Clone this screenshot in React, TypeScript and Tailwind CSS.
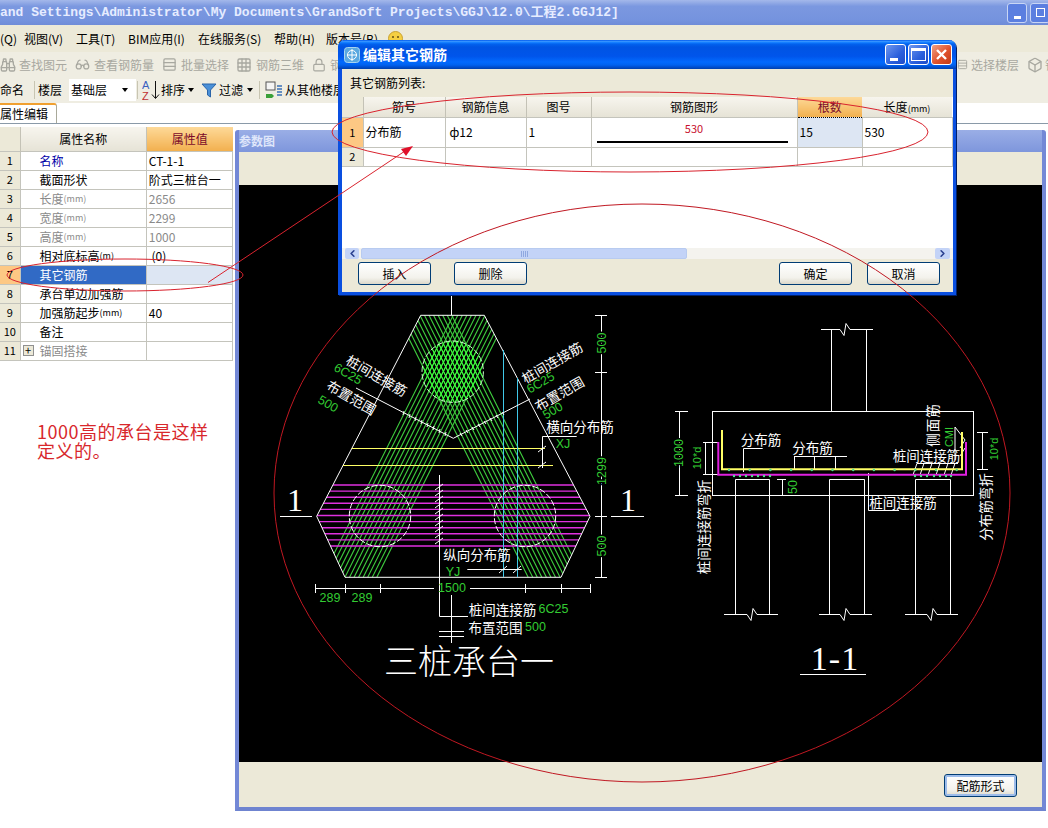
import { Binoculars, Glasses, Lock, Box, Grid3x3, Rows3, ChevronLeft, ChevronRight } from "lucide-react";
import type { ReactNode } from "react";

const TITLE = "and Settings\\Administrator\\My Documents\\GrandSoft Projects\\GGJ\\12.0\\工程2.GGJ12]";

const rows = [
  { name: "名称", unit: "", value: "CT-1-1", kind: "link" },
  { name: "截面形状", unit: "", value: "阶式三桩台一", kind: "" },
  { name: "长度", unit: "(mm)", value: "2656", kind: "dim" },
  { name: "宽度", unit: "(mm)", value: "2299", kind: "dim" },
  { name: "高度", unit: "(mm)", value: "1000", kind: "dim" },
  { name: "相对底标高", unit: "(m)", value: " (0)", kind: "" },
  { name: "其它钢筋", unit: "", value: "", kind: "active" },
  { name: "承台单边加强筋", unit: "", value: "", kind: "" },
  { name: "加强筋起步", unit: "(mm)", value: "40", kind: "" },
  { name: "备注", unit: "", value: "", kind: "" },
  { name: "锚固搭接", unit: "", value: "", kind: "group" },
];

const LUNA =
  "bg-[linear-gradient(180deg,#0058ee_0%,#3593ff_5%,#127dff_9%,#0262ee_14%,#0054e3_24%,#0055eb_56%,#026afe_76%,#0062ef_86%,#0052d6_92%,#0040ab_100%)]";

function XpButton({ children, glow }: { children: ReactNode; glow?: boolean }) {
  return (
    <button
      className={`flex h-[23px] w-[73px] items-center justify-center rounded-[3px] border border-[#003c74] bg-[linear-gradient(180deg,#ffffff,#f3f2ec_70%,#dcd8ca)] text-[12px] text-black ${
        glow ? "shadow-[inset_0_0_0_2px_#9dbcea]" : ""
      }`}
    >
      {children}
    </button>
  );
}

function WinButton({ kind, close }: { kind: "min" | "max"; close?: boolean }) {
  if (close) {
    return (
      <span className="flex size-[21px] items-center justify-center rounded-[3px] border border-white bg-[linear-gradient(135deg,#f0a184,#e0522c_55%,#c23a16)]">
        <svg width="13" height="13" viewBox="0 0 13 13">
          <path d="M2 2l9 9M11 2l-9 9" stroke="white" strokeWidth="2.4" />
        </svg>
      </span>
    );
  }
  return (
    <span className="flex size-[21px] items-center justify-center rounded-[3px] border border-white bg-[linear-gradient(135deg,#6f97ee,#2a5fdc_60%,#1e4cc8)]">
      {kind === "min" ? (
        <span className="mt-[9px] -ml-[3px] h-[3px] w-[8px] bg-white" />
      ) : (
        <span className="h-[13px] w-[15px] border border-t-[3px] border-white" />
      )}
    </span>
  );
}

function Caret() {
  return <span className="inline-block border-x-[3px] border-t-[4px] border-x-transparent border-t-black" />;
}

function Drawing() {
  const hatch = Array.from({ length: 13 }, (_, i) => i - 6);
  const xAt = (y: number, k: number) => 452.7 + (y - 371.7) * 0.5 + k * 4.55;
  const magenta = Array.from({ length: 11 }, (_, i) => 485 + i * 6.1);
  const cad = "'Noto Sans CJK SC', sans-serif";
  const zig = (x: number, y: number, l: number, r: number) =>
    `M${l} ${y}H${x - 5}L${x - 1} ${y + 6}L${x + 1} ${y - 6}L${x + 5} ${y}H${r}`;
  const dots1 = Array.from({ length: 12 }, (_, i) => 729 + i * 20.7);
  const dots2 = [734, 740, 746, 752, 758, 764, 770, 915, 921, 927, 934, 940, 946, 951];
  const bands = (
    <>
      {hatch.map((k) => (
        <line key={`a${k}`} x1={xAt(315, k)} y1={315} x2={xAt(578, k)} y2={578} />
      ))}
      {hatch.map((k) => (
        <line key={`b${k}`} x1={905 - xAt(315, k)} y1={315} x2={905 - xAt(578, k)} y2={578} />
      ))}
    </>
  );

  return (
    <svg width="803" height="577" viewBox="239 185 803 577" className="block">
      <defs>
        <clipPath id="hex">
          <polygon points="420.7,315.3 484.3,315.3 590,516.3 561,577.3 345,577.3 316.7,516.3" />
        </clipPath>
        <clipPath id="pile">
          <circle cx="452.7" cy="371.7" r="30.7" />
        </clipPath>
      </defs>

      <g clipPath="url(#hex)" stroke="#3fcf3f" strokeWidth="1.1">
        {bands}
        {magenta.map((y) => (
          <line key={y} x1={310} y1={y} x2={600} y2={y} stroke="#e030e0" strokeWidth="1.4" />
        ))}
      </g>
      <g clipPath="url(#pile)" stroke="#3dff3d" strokeWidth="1">
        {bands}
      </g>
      <polygon
        points="420.7,315.3 484.3,315.3 590,516.3 561,577.3 345,577.3 316.7,516.3"
        fill="none"
        stroke="white"
      />
      <line x1="351.7" y1="448.5" x2="545" y2="448.5" stroke="#ffff66" />
      <line x1="343" y1="465.5" x2="553" y2="465.5" stroke="#ffff66" />
      <path d="M503.5 350V577M517.5 378V577" stroke="#40c8e8" fill="none" />
      <g fill="none" stroke="white" strokeDasharray="6 2">
        <circle cx="452.7" cy="371.7" r="30.7" stroke="#c8ffc8" />
        <circle cx="380" cy="516" r="30.7" />
        <circle cx="525" cy="516" r="30.7" />
      </g>

      <g stroke="white" fill="none">
        <path d="M451.5 295V315" />
        <path d="M280 516.5H312M611 516.5H644" />
        {/* V shaped leaders of the pile ties */}
        <path d="M356 388L453.3 438.3L530 399" />
        <path d="M404 411l-1 4M410 414l-1 4M416 417l-1 4M422 420l-1 4M428 423l-1 4M434 426l-1 4M440 429l-1 4M446 432l-1 4M460 433l2 3M466 430l2 3M472 427l2 3M478 424l2 3M484 421l2 3M490 418l2 3M496 415l2 3M502 412l2 3" />
        {/* right hand dimensions */}
        <path d="M601.5 315V577M595 315.5H607M595 372.5H607M595 516.5H607M595 577.5H607" />
        {/* bottom dimension */}
        <path d="M315 588.5H434M470 588.5H590M315.5 584V593M345.5 584V593M380.5 584V593M525.5 584V593M561.5 584V593M590.5 584V593" />
        <path d="M439.5 577V616.5H468M451.5 595V643M439 631.5H464M439 636.5H464" />
        {/* XJ and YJ leaders */}
        <path d="M576.7 436.5H542.5V468M538 452l8 -6M538 468l8 -6" />
        <path d="M439.5 475V577M467.3 569.5H521.7M499 573l8 -7M513 573l8 -7" />
        <path d="M435 490l8 -6M435 496l8 -6M435 502l8 -6M435 508l8 -6M435 514l8 -6M435 520l8 -6M435 526l8 -6M435 532l8 -6M435 538l8 -6M435 544l8 -6" />

        {/* section 1-1 */}
        <rect x="712.5" y="411.5" width="261" height="84" />
        <path d="M831.5 329.3V411M866.5 329.3V411" />
        <path d={zig(845, 329.5, 821, 873)} />
        <path d="M735.5 479.5V614M769.5 479.5V614M829.5 479.5V614M864.5 479.5V614M915.5 479.5V614M950.5 479.5V614" />
        <path d="M735.5 479.5H769.5M829.5 479.5H864.5M915.5 479.5H950.5" />
        <path d={zig(752, 614.5, 724, 778)} />
        <path d={zig(845, 614.5, 819, 872)} />
        <path d={zig(932, 614.5, 905, 958)} />
        <path d="M679.5 411.3V495.3M675 411.5H688M675 495.5H688M705.5 442.3V474.7M703 442.5H718M703 474.5H718" />
        <path d="M743.5 448.5H762.7M743.5 448.5V472" />
        <path d="M794 456.5H847M794.5 456V469M814.5 456V469M835.5 456V469" />
        <path d="M917 463.5H958M917 463.3L913 475M924 463.3L920 475M932 463.3L928 475M940 463.3L936 475M948 463.3L944 475M955 463.3L951 475" />
        <path d="M868.5 473V510.5H899" />
        <path d="M982.5 432V469M977 432.5H988M977 469.5H988" />
        <path d="M782.5 479.3V495.3M777 479.5H786M777 495.5H786" />
        <path d="M955 427L965 440M955 427V460M965 440L960 448M965 448L960 456" />
        <path d="M800 674.5H866" />
      </g>
      <path d="M718.3 442V474.7H966V442" fill="none" stroke="#e020e0" strokeWidth="2" />
      <path d="M722 430V469.3H962V432" fill="none" stroke="#ffff66" strokeWidth="2" />
      <g fill="#50e090">
        {dots1.map((x) => (
          <circle key={x} cx={x} cy="470" r="1.2" />
        ))}
        {dots2.map((x) => (
          <circle key={x} cx={x} cy="476" r="1.2" />
        ))}
      </g>

      {/* labels, plan */}
      <g fontFamily={cad} fontSize="13.5" fill="white" textAnchor="middle" dominantBaseline="central">
        <text transform="translate(377 375) rotate(30)">桩间连接筋</text>
        <text transform="translate(351.7 396.7) rotate(30)">布置范围</text>
        <text transform="translate(551.7 362) rotate(-30)">桩间连接筋</text>
        <text transform="translate(559 393) rotate(-30)">布置范围</text>
        <text x="580" y="426">横向分布筋</text>
        <text x="477" y="554">纵向分布筋</text>
        <text x="502.5" y="609">桩间连接筋</text>
        <text x="495.5" y="627">布置范围</text>
        <text x="761" y="438.5">分布筋</text>
        <text x="812.5" y="446.5">分布筋</text>
        <text x="926.5" y="455">桩间连接筋</text>
        <text x="903" y="502.3">桩间连接筋</text>
        <text transform="translate(703 527) rotate(-90)">桩间连接筋弯折</text>
        <text transform="translate(985 507) rotate(-90)">分布筋弯折</text>
        <text transform="translate(932 425) rotate(-90)" letterSpacing="1">侧面筋</text>
        <text x="469" y="659" fontSize="34" fontWeight="300">三桩承台一</text>
      </g>
      <g fontFamily="'Liberation Sans', sans-serif" fontSize="12.5" fill="#33cc33" textAnchor="middle" dominantBaseline="central">
        <text transform="translate(348 374) rotate(30)">6C25</text>
        <text transform="translate(328 404) rotate(30)">500</text>
        <text transform="translate(540.7 382.7) rotate(-30)">6C25</text>
        <text transform="translate(552.7 410.7) rotate(-30)">500</text>
        <text transform="translate(601.7 343) rotate(-90)" stroke="black" strokeWidth="3" paintOrder="stroke">500</text>
        <text transform="translate(601.7 471) rotate(-90)" stroke="black" strokeWidth="3" paintOrder="stroke">1299</text>
        <text transform="translate(601.7 546) rotate(-90)" stroke="black" strokeWidth="3" paintOrder="stroke">500</text>
        <text x="452" y="588">1500</text>
        <text x="330" y="598">289</text>
        <text x="362" y="598">289</text>
        <text x="553.5" y="609">6C25</text>
        <text x="535.5" y="627">500</text>
        <text x="563" y="444">XJ</text>
        <text x="453" y="571.7">YJ</text>
        <text transform="translate(679.3 453) rotate(-90)" stroke="black" strokeWidth="3" paintOrder="stroke">1000</text>
        <text transform="translate(696.7 458) rotate(-90)" fontSize="11">10*d</text>
        <text transform="translate(993.5 449) rotate(-90)" fontSize="11">10*d</text>
        <text transform="translate(792.7 487) rotate(-90)">50</text>
        <text transform="translate(949 437) rotate(-90)" fontSize="11">CMI</text>
      </g>
      <g fontFamily="'Liberation Serif', serif" fill="white" textAnchor="middle">
        <text x="295" y="511" fontSize="32">1</text>
        <text x="628" y="511" fontSize="32">1</text>
        <text x="835" y="670" fontSize="34" letterSpacing="1">1-1</text>
      </g>
    </svg>
  );
}

function Overlay() {
  return (
    <svg width="1048" height="828" viewBox="0 0 1048 828" className="pointer-events-none absolute left-0 top-0">
      <g fill="none" stroke="#d9232e" strokeWidth="1">
        <ellipse cx="642" cy="493" rx="368" ry="289" stroke="#c01822" />
        <ellipse cx="630" cy="132" rx="298" ry="40" />
        <ellipse cx="125" cy="275" rx="118" ry="16" />
        <line x1="208" y1="282.5" x2="405" y2="151" />
      </g>
      <polygon points="413,146 401,149 406,156" fill="#e0102a" />
    </svg>
  );
}

export default function App() {
  return (
    <div className="relative h-[828px] w-[1048px] overflow-hidden bg-white font-['Noto_Sans_CJK_SC','Liberation_Sans',sans-serif] text-[12px] text-black">
      {/* main window title */}
      <div className="flex h-[25px] items-center justify-between overflow-hidden bg-[linear-gradient(180deg,#a4b8ea,#7b98e0_25%,#7593de_80%,#6f8cd8)]">
        <span className="whitespace-pre font-['Liberation_Mono','Noto_Sans_CJK_SC',monospace] text-[13px] font-bold text-[#e6ecff]">
          {TITLE}
        </span>
        <div className="flex w-[41px] shrink-0 gap-[3px]">
          <span className="flex size-[20px] shrink-0 items-end justify-center rounded-[3px] border border-[#c9d6f5] bg-[#5b7fe0] pb-[3px]">
            <span className="h-[3px] w-[7px] bg-white" />
          </span>
          <span className="flex size-[20px] shrink-0 items-center justify-center rounded-[3px] border border-[#c9d6f5] bg-[#5b7fe0]">
            <span className="size-[9px] border-[1.5px] border-white" />
          </span>
        </div>
      </div>

      {/* menu */}
      <div className="flex h-[27px] items-center bg-[#ece9d8] text-[12px]">
        <span className="w-[24px] shrink-0">(Q)</span>
        <span className="w-[52px] shrink-0">视图(V)</span>
        <span className="w-[52px] shrink-0">工具(T)</span>
        <span className="w-[70px] shrink-0">BIM应用(I)</span>
        <span className="w-[76px] shrink-0">在线服务(S)</span>
        <span className="w-[52px] shrink-0">帮助(H)</span>
        <span className="w-[62px] shrink-0">版本号(B)</span>
        <svg width="15" height="15" viewBox="0 0 15 15" className="shrink-0">
          <circle cx="7.5" cy="7.5" r="7" fill="#f5cf42" stroke="#c8a030" />
          <path d="M5 5v2M10 5v2" stroke="#5a4410" strokeWidth="1.4" />
        </svg>
      </div>

      {/* toolbar, disabled items */}
      <div className="flex h-[25px] items-center bg-[#efede2] text-[12px] text-[#a8a8a0]">
        <div className="flex w-[75px] shrink-0 items-center gap-[3px]">
          <Binoculars size={16} />
          <span>查找图元</span>
        </div>
        <div className="flex w-[87px] shrink-0 items-center gap-[4px]">
          <Glasses size={15} />
          <span>查看钢筋量</span>
        </div>
        <div className="flex w-[74px] shrink-0 items-center gap-[4px]">
          <Rows3 size={15} />
          <span>批量选择</span>
        </div>
        <div className="flex w-[76px] shrink-0 items-center gap-[4px]">
          <Grid3x3 size={16} />
          <span>钢筋三维</span>
        </div>
        <div className="flex w-[645px] shrink-0 items-center gap-[4px]">
          <Lock size={14} />
          <span>钢</span>
        </div>
        <div className="flex w-[70px] shrink-0 items-center gap-[3px]">
          <Rows3 size={11} />
          <span>选择楼层</span>
        </div>
        <div className="flex shrink-0 items-center gap-[2px]">
          <Box size={16} />
          <span>钢</span>
        </div>
      </div>

      {/* toolbar */}
      <div className="flex h-[26px] items-center bg-[#efede2] text-[12px]">
        <span className="-ml-[12px] w-[46px] shrink-0">重命名</span>
        <span className="mr-[3px] h-[18px] w-px shrink-0 bg-[#c8c5b2]" />
        <span className="w-[31px] shrink-0">楼层</span>
        <div className="flex h-[22px] w-[67px] shrink-0 items-center justify-between bg-white pl-[2px] pr-[8px]">
          <span>基础层</span>
          <Caret />
        </div>
        <span className="mx-[1px] h-[18px] w-px shrink-0 bg-[#c8c5b2]" />
        <svg width="18" height="22" viewBox="0 0 18 22" className="ml-[3px] mr-[1px] shrink-0">
          <text x="0" y="10" fontSize="11" fill="#3a5fc0" fontFamily="'Liberation Sans', sans-serif">A</text>
          <text x="0" y="21" fontSize="11" fill="#c03030" fontFamily="'Liberation Sans', sans-serif">Z</text>
          <path d="M13.5 2V19M10 15.5l3.5 4 3.5-4" stroke="#111" fill="none" />
        </svg>
        <span className="w-[27px] shrink-0">排序</span>
        <Caret />
        <svg width="16" height="16" viewBox="0 0 16 16" className="ml-[7px] mr-[2px] shrink-0">
          <path d="M1 2H15L9.5 8V15L6.5 13V8Z" fill="#4a90d8" stroke="#2a64a8" />
        </svg>
        <span className="w-[28px] shrink-0">过滤</span>
        <Caret />
        <span className="ml-[6px] h-[18px] w-px shrink-0 bg-[#c8c5b2]" />
        <svg width="18" height="18" viewBox="0 0 18 18" className="ml-[5px] mr-[2px] shrink-0">
          <rect x="1" y="1" width="9" height="8" fill="#f4f4f4" stroke="#555" />
          <path d="M1 13h6l2 2-2 2H1z" fill="#3aa03a" />
          <path d="M12 5h5M12 8h5M12 11h5M12 14h5" stroke="#3a70b8" strokeWidth="1.5" />
        </svg>
        <span>从其他楼层</span>
      </div>

      {/* tab strip */}
      <div className="flex h-[21px] items-end border-b border-[#8a9aa8] bg-white">
        <span className="flex h-[20px] w-[57px] items-center rounded-tr-[3px] border-r border-t-2 border-[#a9a99a] border-t-[#f0a030] bg-white">
          属性编辑
        </span>
      </div>

      <div className="flex">
        {/* property grid */}
        <div className="w-[235px] shrink-0 pt-[3px]">
          <table className="w-[233px] table-fixed border-collapse">
            <colgroup>
              <col className="w-[20px]" />
              <col className="w-[126px]" />
              <col className="w-[86px]" />
            </colgroup>
            <thead>
              <tr className="h-[24px]">
                <th className="bg-[#ece9d8] font-normal" />
                <th className="border-x border-[#c4c2b6] bg-[linear-gradient(180deg,#f7f5ee,#e6e3d6)] font-normal">属性名称</th>
                <th className="bg-[linear-gradient(180deg,#fdd998,#f2b04f)] font-normal text-[#7a0a2a]">属性值</th>
              </tr>
            </thead>
            <tbody>
              {rows.map((row, i) => (
                <tr key={row.name} className="h-[19px]">
                  <td className={`border border-l-0 border-[#c4c4bc] p-0 text-center text-[11px] ${row.kind === "active" ? "bg-[#fdc884]" : "bg-[#ece9d8]"}`}>
                    {i + 1}
                  </td>
                  <td
                    className={`border border-[#c4c4bc] p-0 ${
                      row.kind === "active"
                        ? "bg-[#316ac5] text-white"
                        : row.kind === "link"
                          ? "text-[#0000a8]"
                          : row.kind === "dim" || row.kind === "group"
                            ? "text-[#8a8a8a]"
                            : ""
                    }`}
                  >
                    <div className="flex items-center">
                      {row.kind === "group" ? (
                        <span className="ml-[2px] mr-[6px] flex size-[11px] items-center justify-center border border-[#909090] bg-[#ece9d8] text-[11px] leading-none text-black">
                          +
                        </span>
                      ) : (
                        <span className="w-[19px]" />
                      )}
                      <span className="whitespace-nowrap">{row.name}</span>
                      <span className="whitespace-nowrap text-[9px]">{row.unit}</span>
                    </div>
                  </td>
                  <td
                    className={`overflow-hidden whitespace-pre border border-[#c4c4bc] p-0 pl-[2px] ${
                      row.kind === "active" ? "bg-[#dde6f3]" : row.kind === "dim" ? "text-[#8a8a8a]" : ""
                    }`}
                  >
                    {row.value}
                  </td>
                </tr>
              ))}
            </tbody>
          </table>

          <p className="ml-[37px] mt-[61px] w-[190px] text-[18px] leading-[19px] tracking-[0.5px] text-[#d8282c]">
            1000高的承台是这样
            <br />
            定义的。
          </p>
        </div>

        {/* 参数图 window */}
        <div className="mt-[6px] flex h-[681px] w-[811px] shrink-0 flex-col rounded-t-[3px] border-x-4 border-b-4 border-[#7388d6] border-b-[#6f84d0]">
          <div className="flex h-[22px] shrink-0 items-center bg-[linear-gradient(180deg,#9aaee6,#7e96dc)] text-[12px] font-bold text-[#dfe6fa]">
            参数图
          </div>
          <div className="h-[33px] shrink-0 bg-[#ece9d8]" />
          <div className="h-[577px] shrink-0 bg-black">
            <Drawing />
          </div>
          <div className="flex flex-1 items-start justify-end bg-[#ece9d8] pr-[25px] pt-[12px]">
            <XpButton glow>配筋形式</XpButton>
          </div>
        </div>
      </div>

      {/* 编辑其它钢筋 dialog */}
      <div className="absolute left-[338px] top-[40px] flex h-[255px] w-[618px] flex-col rounded-t-[7px] border-x-[4px] border-b-[3px] border-[#0a4fe0] border-r-[3px] shadow-[1px_1px_0_#00206a]">
        <div className={`-mx-[4px] -mr-[3px] flex h-[29px] shrink-0 items-center rounded-t-[7px] pl-[6px] pr-[4px] ${LUNA}`}>
          <svg width="16" height="16" viewBox="0 0 16 16" className="mr-[3px] shrink-0">
            <rect x="0.5" y="0.5" width="15" height="15" rx="3" fill="#5aa8e0" stroke="#a8d4f0" />
            <circle cx="8" cy="8" r="4.5" fill="none" stroke="white" />
            <path d="M8 2V14M3 8H13" stroke="white" />
          </svg>
          <span className="flex-1 text-[14px] font-bold text-white">编辑其它钢筋</span>
          <div className="flex gap-[2px]">
            <WinButton kind="min" />
            <WinButton kind="max" />
            <WinButton kind="min" close />
          </div>
        </div>
        <div className="flex min-h-0 flex-1 flex-col bg-[#ece9d8]">
          <div className="flex h-[28px] shrink-0 items-center pl-[8px]">其它钢筋列表:</div>
          <div className="h-[151px] shrink-0 bg-white">
            <table className="w-[610px] table-fixed border-collapse">
              <colgroup>
                <col className="w-[21px]" />
                <col className="w-[82px]" />
                <col className="w-[81px]" />
                <col className="w-[65px]" />
                <col className="w-[206px]" />
                <col className="w-[65px]" />
                <col className="w-[90px]" />
              </colgroup>
              <thead>
                <tr className="h-[20px] bg-[linear-gradient(180deg,#f7f5ee,#e6e3d6)]">
                  <th className="border-r border-[#c4c2b6] bg-[#ece9d8] font-normal" />
                  <th className="border-r border-[#c4c2b6] font-normal">筋号</th>
                  <th className="border-r border-[#c4c2b6] font-normal">钢筋信息</th>
                  <th className="border-r border-[#c4c2b6] font-normal">图号</th>
                  <th className="border-r border-[#c4c2b6] font-normal">钢筋图形</th>
                  <th className="bg-[linear-gradient(180deg,#fdd998,#f2b04f)] font-normal text-[#7a0a2a]">根数</th>
                  <th className="font-normal">
                    长度<span className="text-[9px]">(mm)</span>
                  </th>
                </tr>
              </thead>
              <tbody>
                <tr className="h-[30px]">
                  <td className="border border-l-0 border-[#c4c4bc] bg-[#fdc884] p-0 text-center text-[11px]">1</td>
                  <td className="border border-[#c4c4bc] p-0 pl-[2px]">分布筋</td>
                  <td className="border border-[#c4c4bc] p-0 pl-[4px]">ф12</td>
                  <td className="border border-[#c4c4bc] p-0 pl-[2px]">1</td>
                  <td className="border border-[#c4c4bc] p-0">
                    <div className="flex flex-col items-center">
                      <span className="text-[11px] leading-[14px] text-[#c8102e]">530</span>
                      <span className="mt-[6px] h-[2px] w-[191px] -translate-x-[2px] bg-black" />
                    </div>
                  </td>
                  <td className="border border-dotted border-black bg-[#dde6f3] p-0 pl-[2px]">15</td>
                  <td className="border border-[#c4c4bc] p-0 pl-[2px]">530</td>
                </tr>
                <tr className="h-[19px]">
                  <td className="border border-l-0 border-[#c4c4bc] bg-[#ece9d8] p-0 text-center text-[11px]">2</td>
                  <td className="border border-[#c4c4bc]" />
                  <td className="border border-[#c4c4bc]" />
                  <td className="border border-[#c4c4bc]" />
                  <td className="border border-[#c4c4bc]" />
                  <td className="border border-[#c4c4bc]" />
                  <td className="border border-[#c4c4bc]" />
                </tr>
              </tbody>
            </table>
          </div>
          {/* scrollbar */}
          <div className="flex h-[11px] shrink-0 items-center bg-[#f4f3ee] pl-[3px] pr-[3px]">
            <span className="flex h-[11px] w-[14px] shrink-0 items-center justify-center rounded-[2px] bg-[#c3d3f7] text-[#2a3f8f]">
              <ChevronLeft size={11} strokeWidth={3.5} />
            </span>
            <span className="ml-[2px] flex h-[11px] w-[326px] shrink-0 items-center justify-center gap-px rounded-[2px] border border-[#b8cbf0] bg-[#c3d3f7]">
              <span className="h-[6px] w-px bg-[#8fa8e0]" />
              <span className="h-[6px] w-px bg-[#8fa8e0]" />
              <span className="h-[6px] w-px bg-[#8fa8e0]" />
              <span className="h-[6px] w-px bg-[#8fa8e0]" />
            </span>
            <span className="flex-1" />
            <span className="flex h-[11px] w-[15px] shrink-0 items-center justify-center rounded-[2px] bg-[#c3d3f7] text-[#2a3f8f]">
              <ChevronRight size={11} strokeWidth={3.5} />
            </span>
          </div>
          <div className="flex flex-1 items-start pl-[16px] pr-[13px] pt-[3px]">
            <XpButton>插入</XpButton>
            <span className="w-[23px]" />
            <XpButton>删除</XpButton>
            <span className="flex-1" />
            <XpButton>确定</XpButton>
            <span className="w-[15px]" />
            <XpButton>取消</XpButton>
          </div>
        </div>
      </div>

      <Overlay />
    </div>
  );
}
